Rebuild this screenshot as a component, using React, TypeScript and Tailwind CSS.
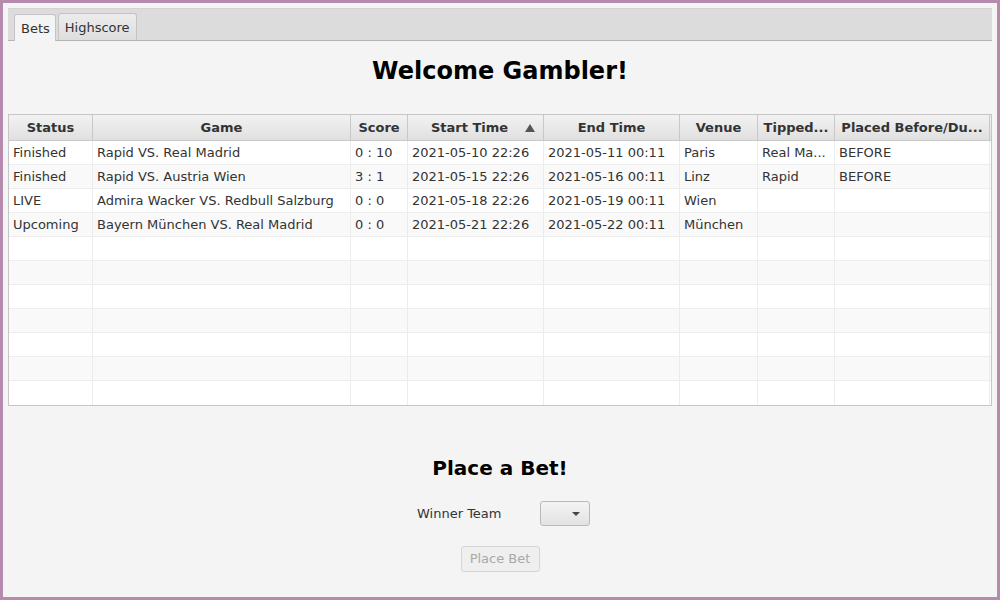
import React from "react";

type Bet = {
  status: string;
  game: string;
  score: string;
  start: string;
  end: string;
  venue: string;
  tipped: string;
  placed: string;
};

const bets: Bet[] = [
  { status: "Finished", game: "Rapid VS. Real Madrid", score: "0 : 10", start: "2021-05-10 22:26", end: "2021-05-11 00:11", venue: "Paris", tipped: "Real Ma...", placed: "BEFORE" },
  { status: "Finished", game: "Rapid VS. Austria Wien", score: "3 : 1", start: "2021-05-15 22:26", end: "2021-05-16 00:11", venue: "Linz", tipped: "Rapid", placed: "BEFORE" },
  { status: "LIVE", game: "Admira Wacker VS. Redbull Salzburg", score: "0 : 0", start: "2021-05-18 22:26", end: "2021-05-19 00:11", venue: "Wien", tipped: "", placed: "" },
  { status: "Upcoming", game: "Bayern München VS. Real Madrid", score: "0 : 0", start: "2021-05-21 22:26", end: "2021-05-22 00:11", venue: "München", tipped: "", placed: "" },
];

const columns = ["Status", "Game", "Score", "Start Time", "End Time", "Venue", "Tipped...", "Placed Before/Du..."];
const grid = "grid grid-cols-[84px_258px_57px_136px_136px_78px_77px_155px_1fr]";

function App() {
  const rows: (Bet | null)[] = [...bets, ...Array(7).fill(null)];

  return (
    <div className="w-[1000px] h-[600px] bg-[#b68aae] p-[3px] font-['DejaVu_Sans',sans-serif]">
      <div className="h-full bg-[#f4f4f4] p-[5px] flex flex-col">
        {/* tab bar */}
        <div className="h-[33px] bg-[#dcdcdc] border-b border-[#b4b4b4] flex items-end px-[6px] gap-[2px] shadow-[inset_0_1px_0_#d4d4d4]">
          <div className="h-[27px] pl-[6px] pr-[5px] pt-[2px] flex items-center bg-[#f4f4f4] border border-b-0 border-[#c4c4c4] rounded-t-[3px] text-[13px] text-[#333] -mb-px">
            Bets
          </div>
          <div className="h-[27px] px-[6px] pt-[2px] flex items-center bg-gradient-to-b from-[#ececec] to-[#dedede] border border-b-0 border-[#c4c4c4] rounded-t-[3px] text-[13px] text-[#333]">
            Highscore
          </div>
        </div>

        <h1 className="mt-[16px] h-[28px] text-center text-[24px] font-bold text-black leading-[28px]">
          Welcome Gambler!
        </h1>

        {/* table */}
        <div className="mt-[29px] border border-[#c6c6c6] bg-white">
          <div className={`${grid} h-[26px] bg-gradient-to-b from-[#f2f2f2] to-[#e0e0e0] border-b border-[#c8c8c8]`}>
            {columns.map((c) => (
              <div key={c} className={`relative flex items-center justify-center border-r border-[#c8c8c8] text-[13px] font-bold text-[#333] whitespace-nowrap ${c === "Start Time" ? "pr-[12px]" : ""}`}>
                {c}
                {c === "Start Time" && (
                  <span className="absolute right-[8px] top-[9px] w-0 h-0 border-l-[5px] border-r-[5px] border-b-[8px] border-l-transparent border-r-transparent border-b-[#555]" />
                )}
              </div>
            ))}
            <div />
          </div>
          {rows.map((r, i) => {
            const cells = r ? [r.status, r.game, r.score, r.start, r.end, r.venue, r.tipped, r.placed] : Array(8).fill("");
            return (
              <div key={i} className={`${grid} h-[24px] border-b border-[#ededed] ${i % 2 === 0 ? "bg-white" : "bg-[#f9f9f9]"} ${i === rows.length - 1 ? "border-b-0 h-[23px]" : ""}`}>
                {cells.map((v, j) => (
                  <div key={j} className="flex items-center pl-[4px] border-r border-[#ececec] text-[13px] text-[#333] whitespace-nowrap overflow-hidden">
                    {v}
                  </div>
                ))}
                <div />
              </div>
            );
          })}
        </div>

        {/* bet form */}
        <div className="flex flex-col items-center">
          <h2 className="mt-[49px] h-[26px] text-[20px] font-bold text-black leading-[26px]">Place a Bet!</h2>
          <div className="mt-[20px] ml-[7px] flex items-center">
            <span className="text-[13px] text-[#333] w-[123px]">Winner Team</span>
            <div className="w-[50px] h-[25px] rounded-[3px] border border-[#b9b9b9] bg-gradient-to-b from-[#f4f4f4] to-[#e2e2e2] flex items-center justify-end pr-[9px]">
              <span className="w-0 h-0 border-l-[4px] border-r-[4px] border-t-[4px] border-l-transparent border-r-transparent border-t-[#444]" />
            </div>
          </div>
          <button className="mt-[20px] h-[26px] w-[79px] rounded-[3px] border border-[#d6d6d6] bg-[#efefef] text-[13px] text-[#a9a9a9]">
            Place Bet
          </button>
        </div>
      </div>
    </div>
  );
}

export default App;
